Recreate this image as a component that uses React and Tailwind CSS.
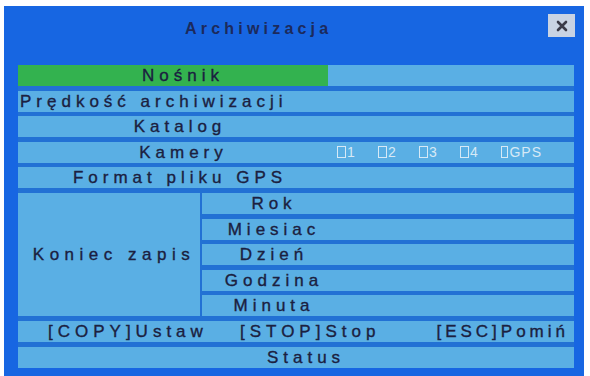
import React from "react";

const font = { fontFamily: '"Liberation Sans", Arial, sans-serif' };

function Row({ children, className = "" }) {
  return (
    <div className={"h-[21px] bg-[#5aafe4] flex items-center text-[17px] leading-[21px] tracking-[5px] text-[#1b2040] [-webkit-text-stroke:0.35px_#1b2040] " + className}>
      {children}
    </div>
  );
}

function Check({ label }) {
  return (
    <div className="w-[41px] flex items-center text-[14px] tracking-[1px] text-[#d6e9f6] [-webkit-text-stroke:0px]">
      <span className="inline-block w-[9px] h-[12px] border border-[#d6e9f6] mr-[1px]" />
      <span>{label}</span>
    </div>
  );
}

export default function App() {
  return (
    <div className="w-[590px] h-[376px] bg-white pt-[6px] pl-[4px] pr-[6px]" style={font}>
      <div className="h-full bg-[#1766e2] flex flex-col">
        <div className="h-[59px] flex items-start">
          <div className="pl-[181px] pt-[11px] text-[16px] font-bold tracking-[4.2px] text-[#1c2a5c]">
            Archiwizacja
          </div>
          <div className="ml-auto mr-[9px] mt-[8px] w-[27px] h-[23px] bg-[#c9d3e3] flex items-center justify-center">
            <svg width="12" height="12" viewBox="0 0 12 12">
              <path d="M2 2 L10 10 M10 2 L2 10" stroke="#3a3a48" strokeWidth="2.6" strokeLinecap="round" />
            </svg>
          </div>
        </div>
        <div className="ml-[14px] mr-[10px] flex flex-col gap-[4.6px] bg-[#2271d4]">
          <Row>
            <div className="w-[310px] h-full bg-[#33b24f] flex items-center justify-center pl-[20px]">Nośnik</div>
          </Row>
          <Row className="pl-[2px] whitespace-nowrap">Prędkość archiwizacji</Row>
          <Row>
            <div className="w-[324px] text-center">Katalog</div>
          </Row>
          <Row>
            <div className="w-[319px] text-center pl-[12px]">Kamery</div>
            <Check label="1" />
            <Check label="2" />
            <Check label="3" />
            <Check label="4" />
            <Check label="GPS" />
          </Row>
          <Row>
            <div className="w-[324px] text-center whitespace-nowrap">Format pliku GPS</div>
          </Row>
          <div className="flex h-[123.4px]">
            <div className="w-[182px] h-full bg-[#5aafe4] flex items-center justify-center pl-[10px] text-[17px] tracking-[5.5px] text-[#1b2040] [-webkit-text-stroke:0.35px_#1b2040] whitespace-nowrap">
              Koniec zapis
            </div>
            <div className="flex-1 ml-[2px] flex flex-col gap-[4.6px]">
              {["Rok", "Miesiac", "Dzień", "Godzina", "Minuta"].map((t) => (
                <Row key={t}>
                  <div className="w-[140px] text-center pl-[4px]">{t}</div>
                </Row>
              ))}
            </div>
          </div>
          <Row className="whitespace-nowrap tracking-[4px]">
            <div className="pl-[30px] w-[222px]">[COPY]Ustaw</div>
            <div>[STOP]Stop</div>
            <div className="ml-auto pr-[5px] tracking-[4px]">[ESC]Pomiń</div>
          </Row>
          <Row>
            <div className="w-full text-center pl-[20px]">Status</div>
          </Row>
        </div>
      </div>
    </div>
  );
}
